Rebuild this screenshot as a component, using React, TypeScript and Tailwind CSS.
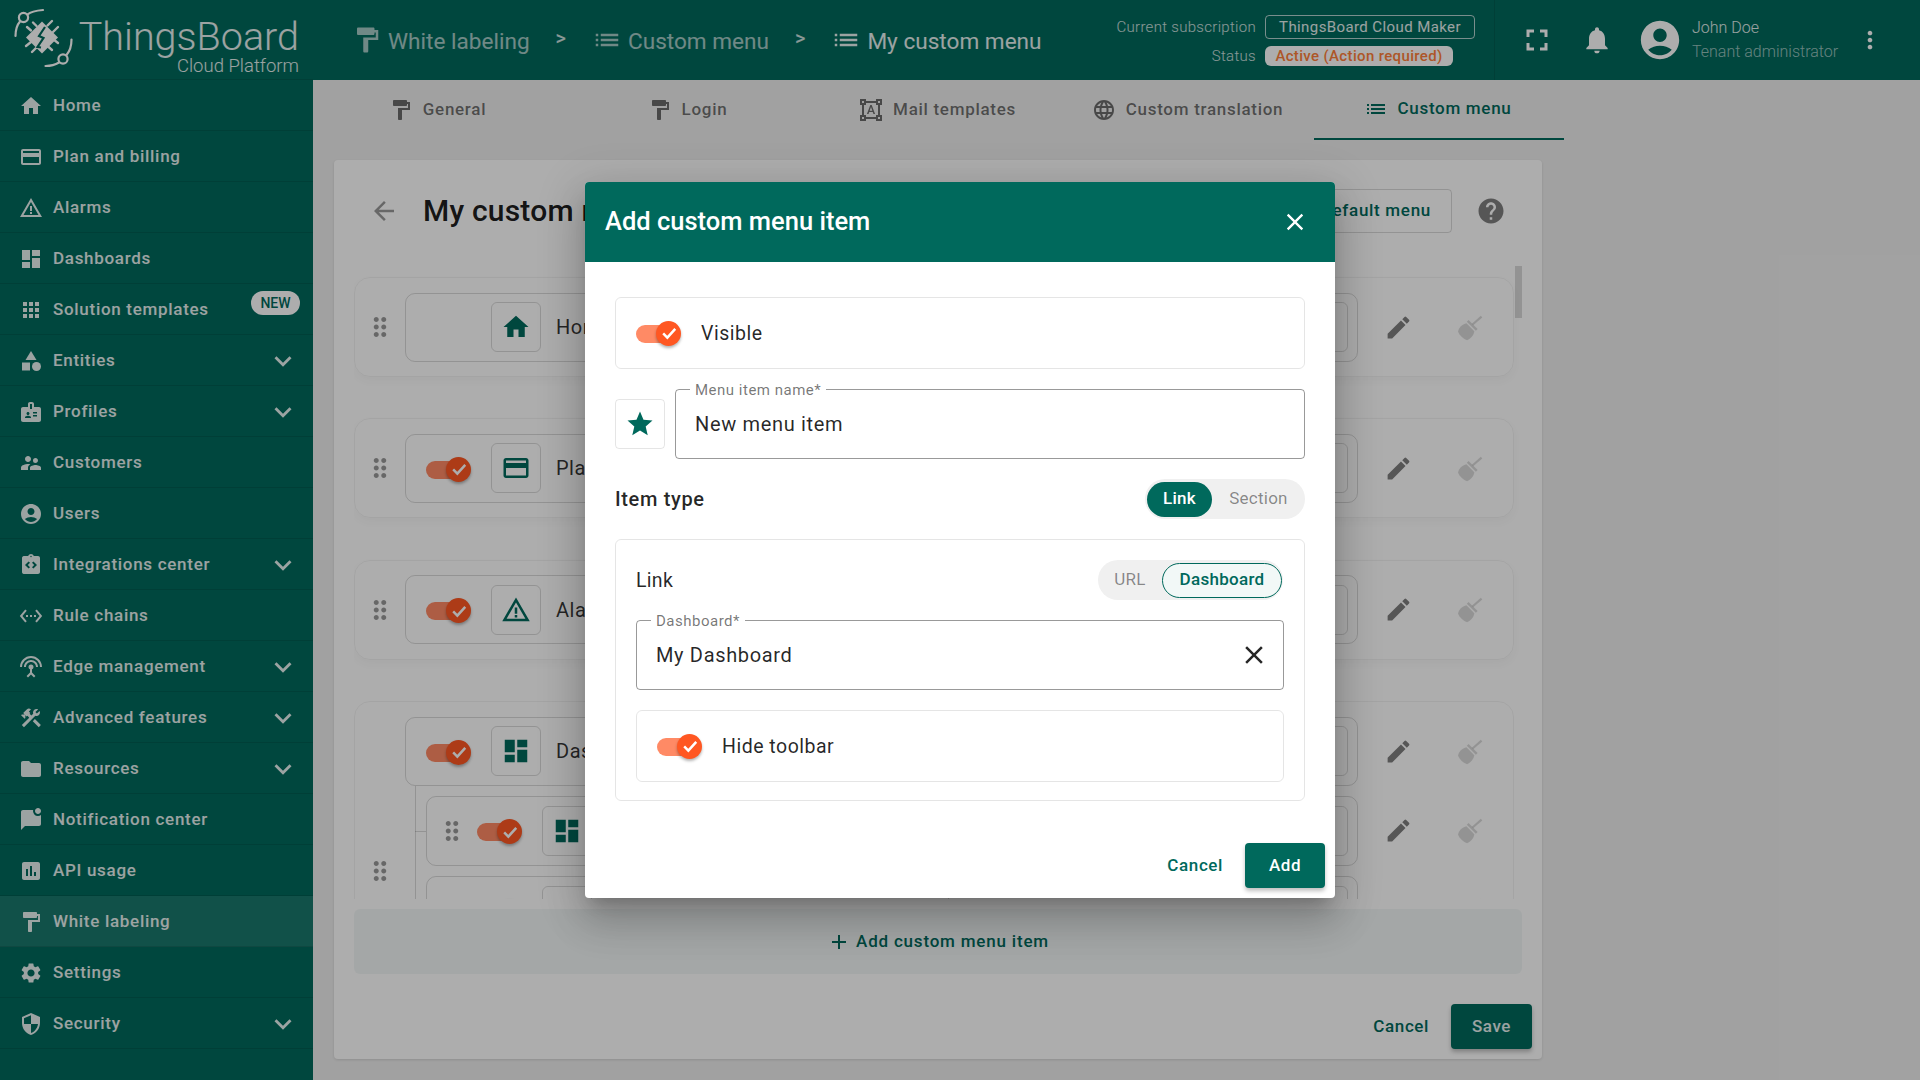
import React from "react";
import {
  MdAccountCircle,
  MdAdd,
  MdApps,
  MdArrowBack,
  MdAssessment,
  MdBadge,
  MdCategory,
  MdClose,
  MdConstruction,
  MdDashboard,
  MdDragIndicator,
  MdEdit,
  MdExpandMore,
  MdFolder,
  MdFormatPaint,
  MdFormatShapes,
  MdFullscreen,
  MdHelp,
  MdHome,
  MdIntegrationInstructions,
  MdLanguage,
  MdList,
  MdMarkChatUnread,
  MdMoreVert,
  MdNotifications,
  MdOutlinePayment,
  MdSecurity,
  MdSettings,
  MdSettingsEthernet,
  MdSettingsInputAntenna,
  MdStar,
  MdSupervisorAccount,
  MdWarningAmber,
} from "react-icons/md";

const sideItems = [
  { label: "Home", icon: MdHome },
  { label: "Plan and billing", icon: MdOutlinePayment },
  { label: "Alarms", icon: MdWarningAmber },
  { label: "Dashboards", icon: MdDashboard },
  { label: "Solution templates", icon: MdApps, badge: true },
  { label: "Entities", icon: MdCategory, more: true },
  { label: "Profiles", icon: MdBadge, more: true },
  { label: "Customers", icon: MdSupervisorAccount },
  { label: "Users", icon: MdAccountCircle },
  { label: "Integrations center", icon: MdIntegrationInstructions, more: true },
  { label: "Rule chains", icon: MdSettingsEthernet },
  { label: "Edge management", icon: MdSettingsInputAntenna, more: true },
  { label: "Advanced features", icon: MdConstruction, more: true },
  { label: "Resources", icon: MdFolder, more: true },
  { label: "Notification center", icon: MdMarkChatUnread },
  { label: "API usage", icon: MdAssessment },
  { label: "White labeling", icon: MdFormatPaint, active: true },
  { label: "Settings", icon: MdSettings },
  { label: "Security", icon: MdSecurity, more: true },
];

const tabs = [
  { label: "General", icon: MdFormatPaint },
  { label: "Login", icon: MdFormatPaint },
  { label: "Mail templates", icon: MdFormatShapes },
  { label: "Custom translation", icon: MdLanguage },
  { label: "Custom menu", icon: MdList, active: true },
];

const Logo = () => (
  <svg viewBox="0 0 80 80" className="w-[80px] h-[80px] shrink-0" fill="none">
    <g stroke="#fff" strokeWidth="2.2" strokeLinecap="round">
      <circle cx="23.5" cy="17.5" r="4.6" />
      <path d="M27.5 14.5 C31 11.5 37 10.5 43 10" />
      <path d="M20 21.5 C17 25 15.5 30 15.5 36" />
      <circle cx="63" cy="59" r="4.6" />
      <path d="M66.5 55 C70 51 71.5 45 71.5 39.5" />
      <path d="M59 62.5 C55 65 50 66 45.5 66" />
    </g>
    <g stroke="#fff" strokeWidth="2.4" strokeLinecap="round">
      <path d="M33 22.5 L36.5 26" />
      <path d="M52 21 L47.5 25.5" />
      <path d="M58 27 L53 32" />
      <path d="M27 27 L31 30.5" />
      <path d="M26 46 L31 42" />
      <path d="M32 52 L36.5 47.5" />
      <path d="M58 43 L53 39" />
      <path d="M52 50 L47.5 46" />
    </g>
    <path d="M42 21.5 L58 37.5 L42 53.5 L26 37.5 Z" fill="#fff" />
    <path d="M45 27 L39 36 L43.5 38 L37.5 47 L41 47.5" stroke="#00695c" strokeWidth="2.2" fill="none" />
  </svg>
);

const Broom = () => (
  <svg viewBox="0 0 24 24" className="w-[29px] h-[29px]" fill="currentColor" stroke="currentColor">
    <path d="M22 3 L14.5 9.5" strokeWidth="1.8" fill="none" />
    <path d="M10.5 6.5 L18 14" strokeWidth="2" fill="none" />
    <path
      d="M9.5 8.5 L16 15 C15.5 18.5 13 21 10 22.5 C7 21.5 4 19 2.5 15.5 C3 12 6 9.5 9.5 8.5 Z"
      stroke="none"
    />
  </svg>
);

const Toggle = () => (
  <span className="relative block w-[45px] h-[25px] shrink-0">
    <span className="absolute left-0 top-[4px] w-[40px] h-[18px] rounded-full bg-[#ff8a65]" />
    <span className="absolute right-0 top-0 w-[25px] h-[25px] rounded-full bg-[#ff5722] shadow-[0_2px_3px_rgba(0,0,0,0.3)] flex items-center justify-center">
      <svg viewBox="0 0 24 24" className="w-[20px] h-[20px]" fill="none" stroke="#fff" strokeWidth="3">
        <path d="M5 12.5 L10 17.5 L19.5 7" />
      </svg>
    </span>
  </span>
);

const Sidebar = () => (
  <aside className="w-[313px] h-full shrink-0 bg-[#00695c] text-white/90 z-10">
    <div className="h-[80px] flex border-b border-black/10">
      <Logo />
      <div className="w-[219px] pt-[18px] flex flex-col items-end font-light">
        <span className="text-[39.5px] leading-[38px]">ThingsBoard</span>
        <span className="text-[18.5px] leading-[18px] mt-[1px]">Cloud Platform</span>
      </div>
    </div>
    <nav>
      {sideItems.map((item) => (
        <div
          key={item.label}
          className={`relative h-[51px] flex items-center pl-[19px] pt-[1px] border-b border-black/10 ${item.active ? "bg-white/10" : ""}`}
        >
          <item.icon className="w-[24px] h-[24px] shrink-0" />
          <span className="ml-[10px] pt-[1px] text-[17px] font-medium tracking-[0.7px]">{item.label}</span>
          {item.more && <MdExpandMore className="absolute left-[266px] w-[34px] h-[34px]" />}
          {item.badge && (
            <span className="absolute left-[251px] top-[7px] w-[49px] h-[24px] rounded-full bg-white text-[#00695c] text-[14px] font-medium flex items-center justify-center">
              NEW
            </span>
          )}
        </div>
      ))}
    </nav>
  </aside>
);

const Crumb = ({ icon: Icon, label, bright }: { icon: React.ElementType; label: string; bright?: boolean }) => (
  <div className={`flex items-center gap-[6px] text-[22.6px] ${bright ? "text-white/90" : "text-white/65"}`}>
    <Icon className="w-[30px] h-[30px] -mx-[3px]" />
    <span className="ml-[3px] pt-[4px]">{label}</span>
  </div>
);

const Chevron = () => (
  <span className="ml-[26px] mr-[29px] text-[20px] font-medium -mt-[4px] text-white/80">&gt;</span>
);

const Header = () => (
  <header className="h-[80px] shrink-0 bg-[#00695c] flex items-center pl-[42px] pr-[36px] text-white">
    <Crumb icon={MdFormatPaint} label="White labeling" />
    <Chevron />
    <Crumb icon={MdList} label="Custom menu" />
    <Chevron />
    <Crumb icon={MdList} label="My custom menu" bright />
    <div className="ml-auto flex items-center h-full">
      <div className="grid grid-cols-[auto_auto] gap-x-[9px] gap-y-[7px] items-center pt-[1px] pr-[19px] text-[15px] leading-[20px] font-light tracking-[0.3px] text-white/80">
        <span className="justify-self-end">Current subscription</span>
        <span className="w-[210px] h-[24px] rounded-[4px] border border-white/70 flex items-center justify-center text-[15px] font-normal tracking-[0.4px] text-white/90">
          ThingsBoard Cloud Maker
        </span>
        <span className="justify-self-end">Status</span>
        <span className="w-[188px] h-[20px] rounded-[6px] bg-white text-[#ff7f3a] flex items-center justify-center text-[15px] font-medium tracking-[0.35px]">
          Active (Action required)
        </span>
      </div>
      <div className="h-full border-l border-black/10 flex items-center pl-[24px]">
        <MdFullscreen className="w-[36px] h-[36px]" />
        <MdNotifications className="w-[32px] h-[32px] ml-[26px]" />
        <MdAccountCircle className="w-[46px] h-[46px] ml-[24px]" />
        <div className="ml-[9px] w-[148px] font-light text-[16px] leading-[24px]">
          <div className="text-white/90">John Doe</div>
          <div className="text-white/60">Tenant administrator</div>
        </div>
        <MdMoreVert className="w-[28px] h-[28px] ml-[16px]" />
      </div>
    </div>
  </header>
);

const Tabs = () => (
  <div className="h-[60px] ml-px flex shrink-0">
    {tabs.map((tab) => (
      <div
        key={tab.label}
        className={`w-[250px] flex items-center justify-center gap-[10px] pb-[1px] pr-[3px] text-[17px] font-medium tracking-[0.7px] ${
          tab.active ? "text-[#00695c] border-b-2 border-[#00695c]" : "text-black/55"
        }`}
      >
        <tab.icon className="w-[24px] h-[24px]" />
        <span>{tab.label}</span>
      </div>
    ))}
  </div>
);

const IconBox = ({ icon: Icon }: { icon: React.ElementType }) => (
  <span className="w-[50px] h-[50px] shrink-0 rounded-[6px] border border-black/15 flex items-center justify-center text-[#00695c]">
    <Icon className="w-[30px] h-[30px]" />
  </span>
);

const Actions = () => (
  <div className="flex ml-[5px]">
    <span className="w-[71px] flex justify-center text-black/50">
      <MdEdit className="w-[29px] h-[29px]" />
    </span>
    <span className="w-[71px] flex justify-center text-black/[0.15]">
      <Broom />
    </span>
  </div>
);

const ItemBox = ({
  icon,
  label,
  noToggle,
  sub,
}: {
  icon: React.ElementType;
  label: string;
  noToggle?: boolean;
  sub?: boolean;
}) => (
  <div className={`rounded-[10px] border border-black/15 flex items-center ${sub ? "w-[932px] h-[70px]" : "w-[953px] h-[69px] pl-[20px]"}`}>
    {sub && (
      <span className="w-[50px] flex justify-center text-black/40">
        <MdDragIndicator className="w-[30px] h-[30px]" />
      </span>
    )}
    {noToggle ? (
      <span className="w-[45px]" />
    ) : (
      <span className="mt-[2px]">
        <Toggle />
      </span>
    )}
    <span className="ml-[20px]">
      <IconBox icon={icon} />
    </span>
    <span className="ml-[15px] flex-1 text-[20px] tracking-[0.5px] text-black/80">{label}</span>
    <span className="w-[400px] h-[50px] mr-[9px] rounded-[6px] border border-black/15" />
  </div>
);

const SubRow = ({ icon, label }: { icon: React.ElementType; label: string }) => (
  <div className="relative flex items-center ml-[21px]">
    <span className="absolute -left-[11px] top-[35px] w-[11px] border-t border-black/15" />
    <ItemBox icon={icon} label={label} sub />
    <Actions />
  </div>
);

const MenuRow = ({ icon, label, noToggle }: { icon: React.ElementType; label: string; noToggle?: boolean }) => (
  <div className="w-[1160px] h-[100px] shrink-0 rounded-[16px] border border-black/5 shadow-[0_4px_10px_rgba(0,0,0,0.03)] flex items-center">
    <span className="w-[50px] flex justify-center text-black/40">
      <MdDragIndicator className="w-[30px] h-[30px]" />
    </span>
    <ItemBox icon={icon} label={label} noToggle={noToggle} />
    <Actions />
  </div>
);

const MenuCard = () => (
  <section className="relative ml-[21px] mt-[20px] w-[1208px] h-[899px] rounded-[4px] bg-white shadow-[0_1px_3px_rgba(0,0,0,0.12)]">
    <div className="h-[106px] flex items-center pl-[35px] pr-[36px] pb-[5px]">
      <MdArrowBack className="w-[30px] h-[30px] text-black/40" />
      <h1 className="ml-[24px] text-[30px] font-medium tracking-[0.2px] text-black/90">My custom menu</h1>
      <span className="ml-auto h-[44px] px-[20px] rounded-[4px] border border-black/15 flex items-center text-[17px] font-medium tracking-[0.7px] text-[#00695c]">
        Reset to default menu
      </span>
      <MdHelp className="ml-[24px] w-[30px] h-[30px] text-black/50" />
    </div>
    <div className="relative ml-[20px] w-[1168px] h-[633px] overflow-hidden pt-[11px]">
      <div className="flex flex-col gap-[41.33px]">
        <MenuRow icon={MdHome} label="Home" noToggle />
        <MenuRow icon={MdOutlinePayment} label="Plan and billing" />
        <MenuRow icon={MdWarningAmber} label="Alarms" />
        <div className="w-[1160px] rounded-[16px] border border-black/5 flex items-center py-[15px]">
          <span className="w-[50px] flex justify-center text-black/40">
            <MdDragIndicator className="w-[30px] h-[30px]" />
          </span>
          <div className="relative flex flex-col gap-[10px]">
            <span className="absolute left-[10px] top-[69px] bottom-[35px] border-l border-black/15" />
            <div className="flex items-center">
              <ItemBox icon={MdDashboard} label="Dashboards" />
              <Actions />
            </div>
            <SubRow icon={MdDashboard} label="All" />
            <SubRow icon={MdDashboard} label="Groups" />
            <SubRow icon={MdDashboard} label="Shared" />
          </div>
        </div>
      </div>
      <span className="absolute right-0 top-0 w-[7px] h-[52px] bg-black/15" />
    </div>
    <div className="ml-[20px] mt-[10px] w-[1168px] h-[65px] rounded-[6px] bg-[#00695c]/5 flex items-center justify-center gap-[5px] text-[17px] font-medium tracking-[0.8px] text-[#00695c]">
      <MdAdd className="w-[24px] h-[24px]" />
      <span>Add custom menu item</span>
    </div>
    <div className="mt-[30px] pr-[10px] flex justify-end items-center gap-[22px] text-[17px] font-medium tracking-[0.6px]">
      <span className="text-[#00695c]">Cancel</span>
      <span className="w-[81px] h-[45px] rounded-[4px] bg-[#00695c] text-white/90 flex items-center justify-center shadow-[0_3px_4px_rgba(0,0,0,0.25)]">
        Save
      </span>
    </div>
  </section>
);

const ToggleBox = ({ label }: { label: string }) => (
  <div className="h-[72px] rounded-[6px] border border-black/10 flex items-center pl-[20px] gap-[20px] text-[19.5px] tracking-[0.5px] text-black/85">
    <Toggle />
    <span className="pt-[2px]">{label}</span>
  </div>
);

const OutlinedField = ({ label, value, clearable }: { label: string; value: string; clearable?: boolean }) => (
  <div className="relative flex-1 h-[70px] rounded-[4px] border border-black/40 flex items-center pl-[19px] pr-[14px] text-[20px] tracking-[0.66px] text-black/85">
    <span className="absolute left-[14px] -top-[10px] bg-white px-[5px] text-[15px] leading-[20px] tracking-[0.5px] text-black/55">{label}</span>
    <span className="flex-1">{value}</span>
    {clearable && <MdClose className="w-[30px] h-[30px] text-black/85" />}
  </div>
);

const Dialog = () => (
  <div className="absolute inset-0 z-20 bg-black/[0.32] flex items-center justify-center">
    <div className="w-[750px] h-[716px] rounded-[4px] overflow-hidden bg-white flex flex-col shadow-[0_11px_15px_-7px_rgba(0,0,0,0.2),0_24px_38px_3px_rgba(0,0,0,0.14),0_9px_46px_8px_rgba(0,0,0,0.12)]">
      <div className="h-[80px] shrink-0 bg-[#00695c] text-white flex items-center justify-between pl-[20px] pr-[26px]">
        <h2 className="text-[25.5px] font-medium pb-[1px]">Add custom menu item</h2>
        <MdClose className="w-[28px] h-[28px]" />
      </div>
      <div className="px-[30px] pt-[35px] flex flex-col gap-[20px]">
        <ToggleBox label="Visible" />
        <div className="flex items-center gap-[10px]">
          <span className="w-[50px] h-[50px] rounded-[4px] border border-black/10 flex items-center justify-center text-[#00695c]">
            <MdStar className="w-[30px] h-[30px]" />
          </span>
          <OutlinedField label="Menu item name*" value="New menu item" />
        </div>
        <div className="h-[40px] flex items-center justify-between">
          <span className="text-[20px] font-medium tracking-[0.65px] text-black/85">Item type</span>
          <div className="w-[160px] h-[40px] rounded-full bg-[#f0f0f0] py-[2.5px] pl-[2px] flex items-center text-[17px] tracking-[0.25px]">
            <span className="w-[65px] h-[35px] rounded-full bg-[#00695c] text-white font-medium flex items-center justify-center">Link</span>
            <span className="flex-1 text-center text-black/45">Section</span>
          </div>
        </div>
        <div className="h-[262px] rounded-[6px] border border-black/10 px-[20px] pt-[20px] flex flex-col">
          <div className="h-[40px] flex items-center justify-between">
            <span className="text-[19.5px] tracking-[0.3px] text-black/85 pt-[1px]">Link</span>
            <div className="w-[185px] h-[40px] mr-px rounded-full bg-[#f0f0f0] flex items-center text-[17px] tracking-[0.3px]">
              <span className="w-[64px] text-center text-black/45">URL</span>
              <span className="w-[120px] h-[35px] rounded-full border border-[#00695c] bg-[#f2f8f7] text-[#00695c] font-medium flex items-center justify-center">Dashboard</span>
            </div>
          </div>
          <div className="mt-[20px] flex">
            <OutlinedField label="Dashboard*" value="My Dashboard" clearable />
          </div>
          <div className="mt-[20px]">
            <ToggleBox label="Hide toolbar" />
          </div>
        </div>
      </div>
      <div className="mt-auto pb-[10px] pr-[10px] flex justify-end items-center gap-[22px] text-[17px] font-medium tracking-[0.6px]">
        <span className="text-[#00695c]">Cancel</span>
        <span className="w-[80px] h-[45px] rounded-[4px] bg-[#00695c] text-white flex items-center justify-center shadow-[0_3px_4px_rgba(0,0,0,0.25)]">
          Add
        </span>
      </div>
    </div>
  </div>
);

const App = () => {
  return (
    <div className="relative w-full h-screen overflow-hidden flex bg-[#eeeeee] font-['Roboto',sans-serif]">
      <Sidebar />
      <main className="flex-1 flex flex-col">
        <Header />
        <Tabs />
        <MenuCard />
      </main>
      <Dialog />
    </div>
  );
};

export default App;
